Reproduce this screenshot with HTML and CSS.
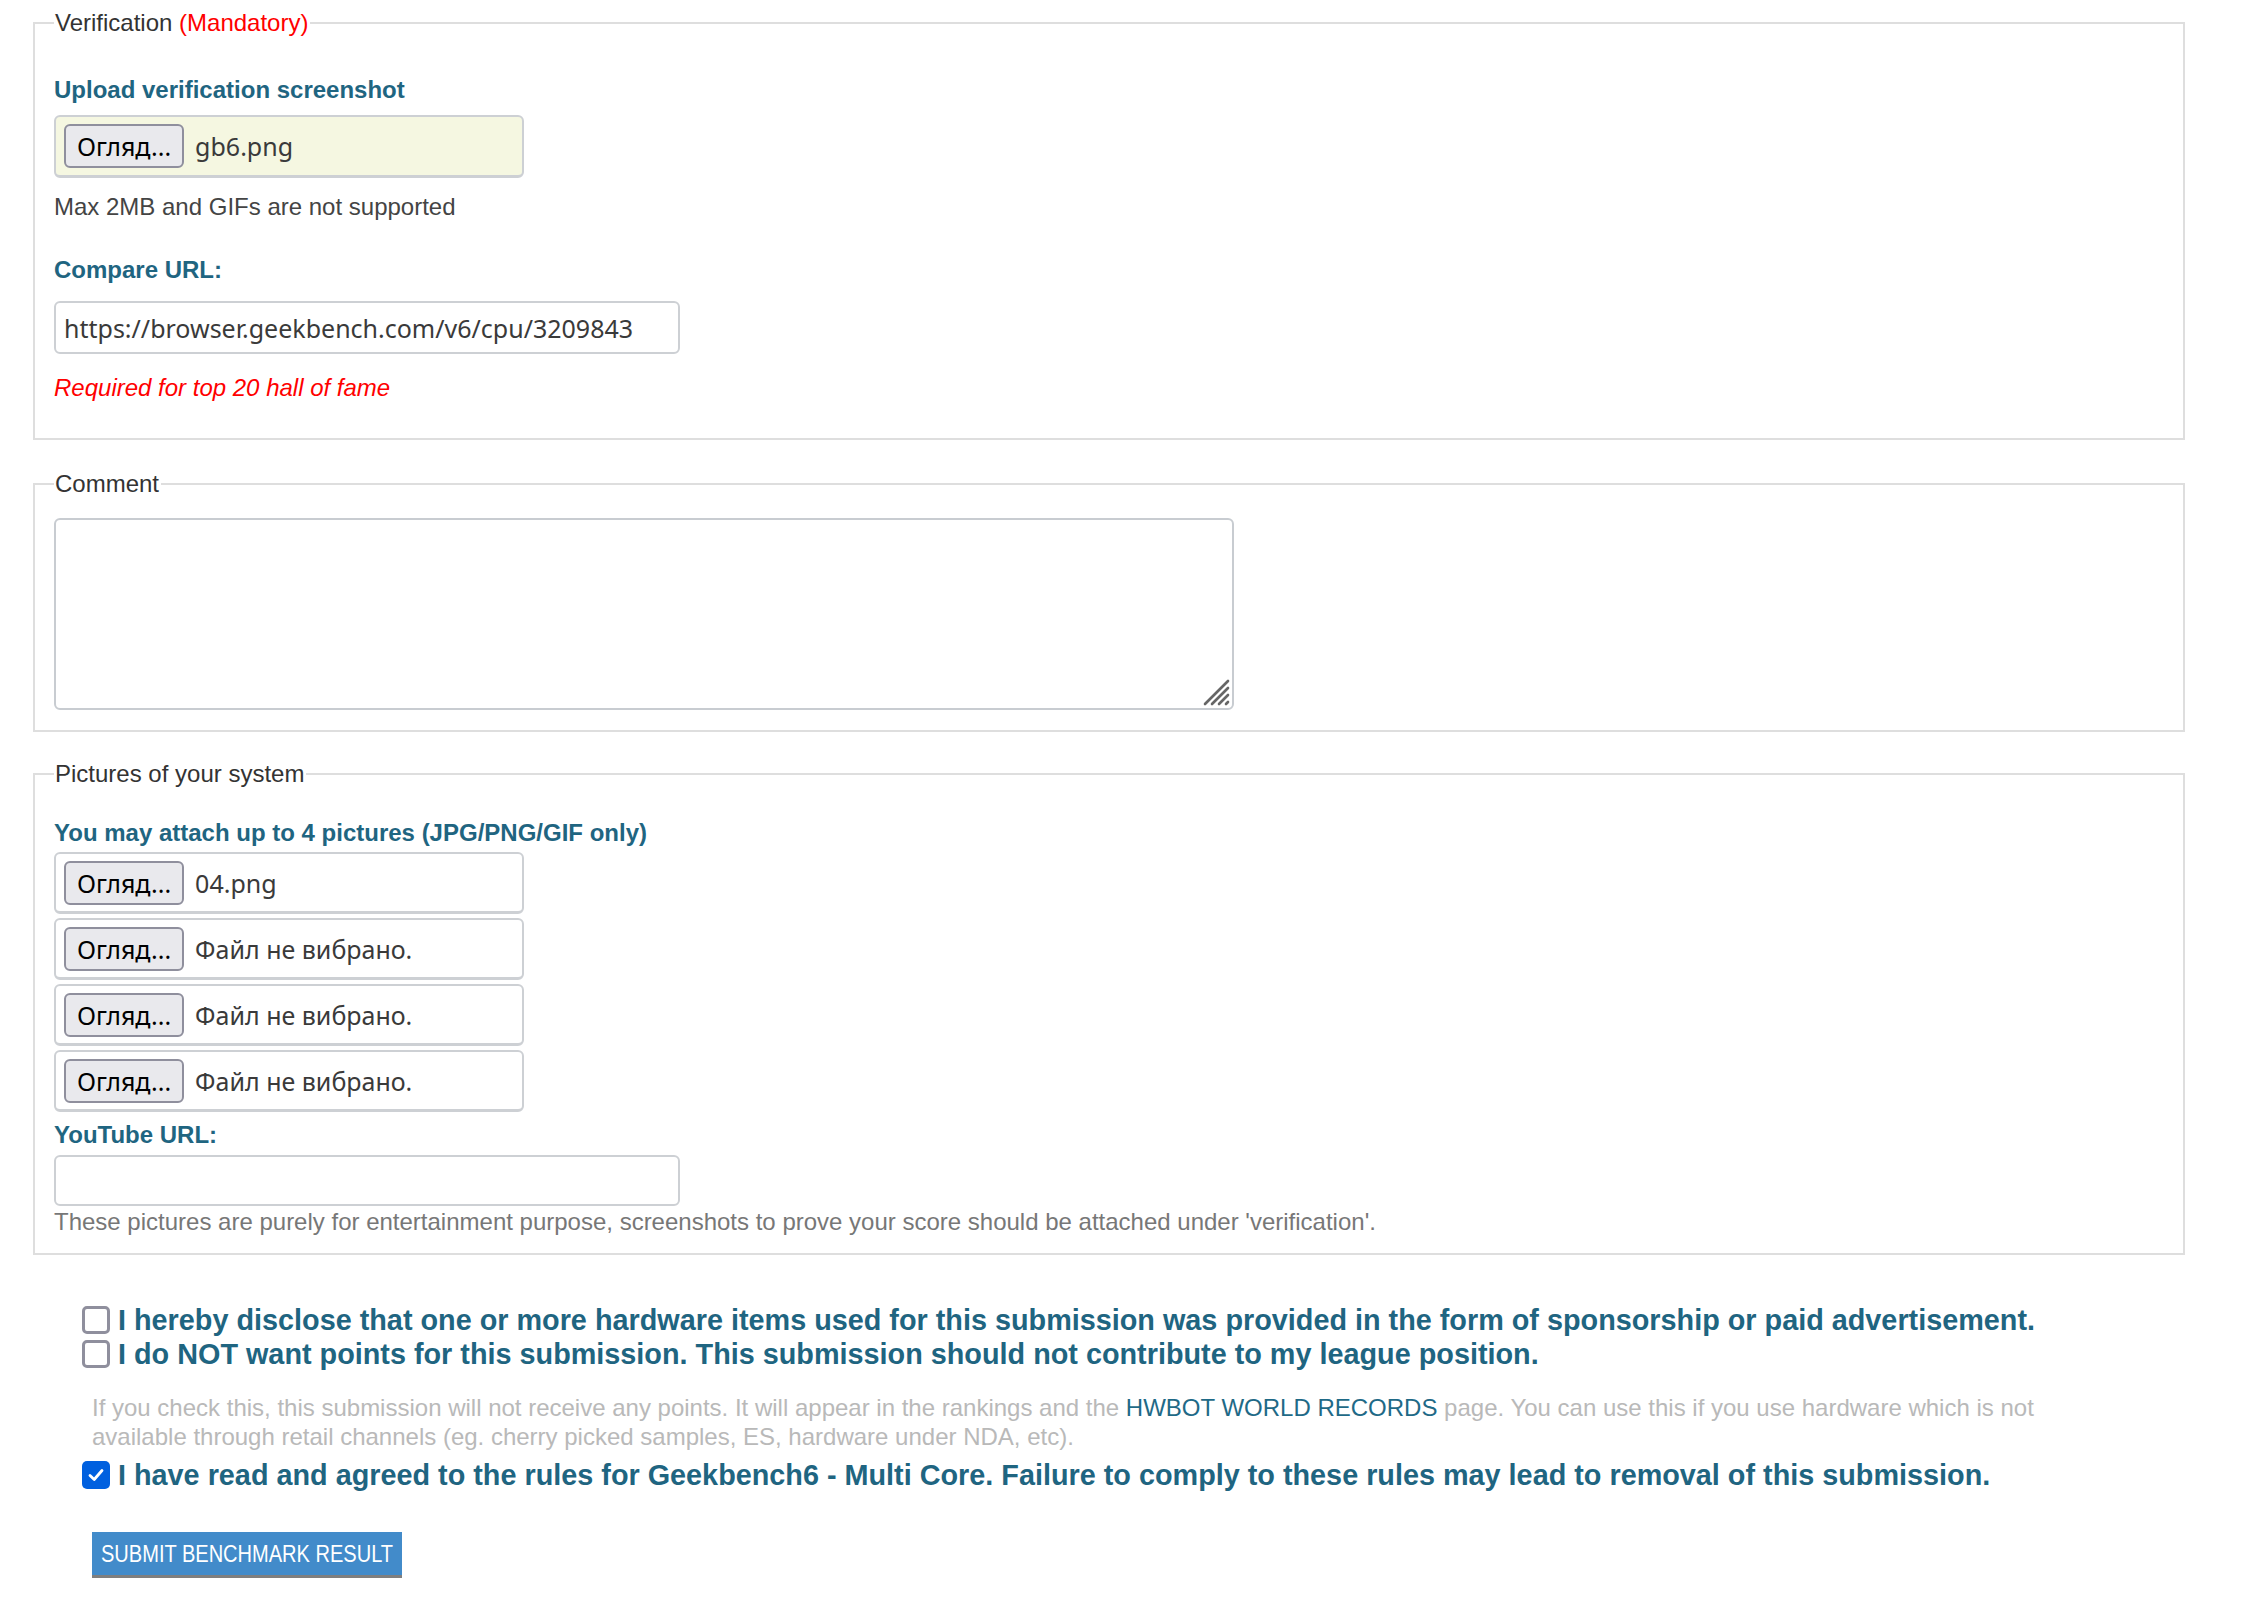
FILE: index.html
```html
<!DOCTYPE html>
<html lang="en">
<head>
<meta charset="utf-8">
<title>Submit benchmark result</title>
<link rel="stylesheet" href="styles.css">
</head>
<body>
<div class="page">
  <fieldset class="box box-verify">
    <legend>Verification <span class="mandatory">(Mandatory)</span></legend>
    <div class="label">Upload verification screenshot</div>
    <div class="file file-filled"><button type="button" class="browse">Огляд...</button><span class="fname">gb6.png</span></div>
    <div class="hint">Max 2MB and GIFs are not supported</div>
    <div class="label label-compare">Compare URL:</div>
    <input class="text-input url-input" type="text" value="https://browser.geekbench.com/v6/cpu/3209843">
    <div class="required">Required for top 20 hall of fame</div>
  </fieldset>

  <fieldset class="box box-comment">
    <legend>Comment</legend>
    <div class="comment-wrap">
      <textarea class="comment"></textarea>
      <svg class="grip" width="28" height="28" viewBox="0 0 28 28" aria-hidden="true">
        <g stroke="#666666" stroke-width="2.6" stroke-linecap="round">
          <line x1="25" y1="2" x2="2" y2="25"/>
          <line x1="25" y1="9" x2="9" y2="25"/>
          <line x1="25" y1="16" x2="16" y2="25"/>
          <line x1="25" y1="23" x2="23" y2="25"/>
        </g>
      </svg>
    </div>
  </fieldset>

  <fieldset class="box box-pictures">
    <legend>Pictures of your system</legend>
    <div class="label">You may attach up to 4 pictures (JPG/PNG/GIF only)</div>
    <div class="files">
      <div class="file"><button type="button" class="browse">Огляд...</button><span class="fname">04.png</span></div>
      <div class="file"><button type="button" class="browse">Огляд...</button><span class="fname">Файл не вибрано.</span></div>
      <div class="file"><button type="button" class="browse">Огляд...</button><span class="fname">Файл не вибрано.</span></div>
      <div class="file"><button type="button" class="browse">Огляд...</button><span class="fname">Файл не вибрано.</span></div>
    </div>
    <div class="label label-youtube">YouTube URL:</div>
    <input class="text-input yt-input" type="text" value="">
    <div class="pics-note">These pictures are purely for entertainment purpose, screenshots to prove your score should be attached under 'verification'.</div>
  </fieldset>

  <div class="checks">
    <label class="check-row"><span class="cb"></span><span>I hereby disclose that one or more hardware items used for this submission was provided in the form of sponsorship or paid advertisement.</span></label>
    <label class="check-row"><span class="cb"></span><span>I do NOT want points for this submission. This submission should not contribute to my league position.</span></label>
    <p class="points-note">If you check this, this submission will not receive any points. It will appear in the rankings and the <a href="#" class="note-link">HWBOT WORLD RECORDS</a> page. You can use this if you use hardware which is not available through retail channels (eg. cherry picked samples, ES, hardware under NDA, etc).</p>
    <label class="check-row check-row-last"><span class="cb cb-checked"><svg width="20" height="20" viewBox="0 0 20 20" aria-hidden="true"><path d="M4 10.5 L8.2 14.5 L16 5.5" fill="none" stroke="#fff" stroke-width="2.8" stroke-linecap="round" stroke-linejoin="round"/></svg></span><span>I have read and agreed to the rules for Geekbench6 - Multi Core. Failure to comply to these rules may lead to removal of this submission.</span></label>
    <button type="button" class="submit"><span class="submit-text">SUBMIT BENCHMARK RESULT</span></button>
  </div>
</div>
</body>
</html>
```

FILE: styles.css
```css
html, body {
  margin: 0;
  padding: 0;
  background: #ffffff;
}

body {
  font-family: "Liberation Sans", Arial, sans-serif;
  font-size: 24px;
  color: #333333;
}

.page {
  width: 2152px;
  margin-left: 33px;
  padding-top: 9px;
  padding-bottom: 20px;
}

.box {
  margin: 0;
  min-width: 0;
  border: 2px solid #dedede;
  padding: 0 18px 0 19px;
}

.box legend {
  padding: 0 2px 0 1px;
  font-size: 24px;
  line-height: 28px;
  color: #333333;
}

.mandatory {
  color: #ff0000;
}

.box-verify {
  padding-top: 36px;
  padding-bottom: 33px;
}

.box-comment {
  margin-top: 30px;
  padding-top: 20px;
  padding-bottom: 20px;
}

.box-pictures {
  margin-top: 28px;
  padding-top: 28px;
  padding-bottom: 15px;
}

.label {
  font-weight: bold;
  color: #1f6581;
  line-height: 34px;
}

.label-compare {
  margin-top: 29px;
}

.label-youtube {
  margin-top: 6px;
}

.file {
  box-sizing: border-box;
  width: 470px;
  height: 62px;
  display: flex;
  align-items: center;
  padding-left: 8px;
  border: 2px solid #cdd0d4;
  border-bottom-width: 3px;
  border-radius: 6px;
  background: #ffffff;
  font-family: "Noto Sans", "Open Sans", sans-serif;
  font-size: 25px;
  color: #3a3a3a;
}

.file-filled {
  height: 63px;
  margin-top: 8px;
  background: #f5f7e1;
}

.browse {
  box-sizing: border-box;
  height: 44px;
  padding: 0 11px;
  border: 2px solid #8f8f9d;
  border-radius: 6px;
  background: #e9e9ed;
  font-family: "Noto Sans", "Open Sans", sans-serif;
  font-size: 25px;
  line-height: 38px;
  color: #000000;
}

.fname {
  margin-left: 11px;
  white-space: nowrap;
}

.hint {
  margin-top: 12px;
  line-height: 34px;
  color: #444444;
}

.text-input {
  display: block;
  box-sizing: border-box;
  width: 626px;
  margin: 0;
  padding: 0 8px;
  border: 2px solid #cdd0d4;
  border-radius: 6px;
  background: #ffffff;
  font-family: "Noto Sans", "Open Sans", sans-serif;
  font-size: 25px;
  color: #3a3a3a;
  outline: none;
}

.url-input {
  height: 53px;
  margin-top: 14px;
}

.yt-input {
  height: 51px;
  margin-top: 3px;
}

.required {
  margin-top: 17px;
  line-height: 34px;
  color: #ff0000;
  font-style: italic;
}

.comment-wrap {
  position: relative;
  width: 1180px;
  height: 192px;
}

.comment {
  display: block;
  box-sizing: border-box;
  width: 1180px;
  height: 192px;
  margin: 0;
  border: 2px solid #c8ccd1;
  border-radius: 6px;
  resize: none;
  outline: none;
  font-family: "Noto Sans", sans-serif;
  font-size: 24px;
}

.grip {
  position: absolute;
  right: 3px;
  bottom: 3px;
}

.files {
  margin-top: 2px;
  display: flex;
  flex-direction: column;
  gap: 4px;
}

.pics-note {
  line-height: 32px;
  color: #777777;
}

.checks {
  margin-top: 48px;
  padding-left: 49px;
}

.check-row {
  display: flex;
  align-items: center;
  font-size: 28.8px;
  line-height: 34px;
  font-weight: bold;
  color: #1f6581;
}

.cb {
  box-sizing: border-box;
  flex: none;
  width: 28px;
  height: 28px;
  margin-right: 8px;
  border: 3px solid #8f8f9d;
  border-radius: 5px;
  background: #ffffff;
  display: flex;
  align-items: center;
  justify-content: center;
}

.cb-checked {
  border: none;
  background: #0060df;
}

.points-note {
  margin: 22px 0 0 10px;
  max-width: 1990px;
  font-size: 24px;
  line-height: 29px;
  color: #b9b9b9;
}

.note-link {
  color: #1f6a87;
  text-decoration: none;
}

.check-row-last {
  margin-top: 7px;
}

.submit {
  display: block;
  box-sizing: border-box;
  width: 310px;
  height: 46px;
  margin: 40px 0 0 10px;
  padding: 0 0 0 9px;
  border: none;
  border-bottom: 3px solid #7f7f7f;
  background: #428bca;
  color: #ffffff;
  text-align: left;
  font-family: "Liberation Sans", Arial, sans-serif;
  font-size: 24px;
  line-height: 43px;
  white-space: nowrap;
  overflow: hidden;
}

.submit-text {
  display: inline-block;
  transform: scaleX(0.835);
  transform-origin: left center;
}
```
